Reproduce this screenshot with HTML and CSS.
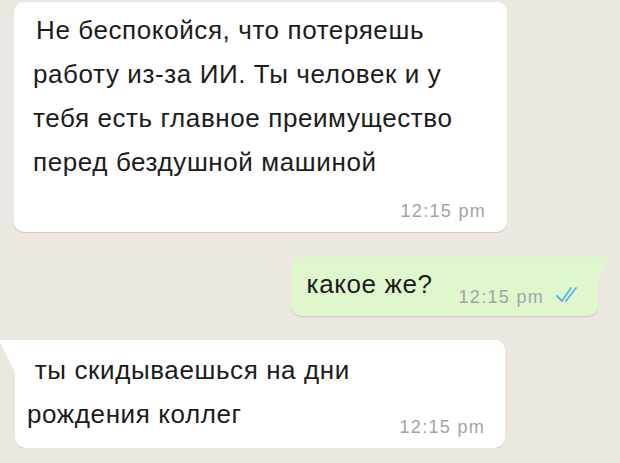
FILE: index.html
```html
<!DOCTYPE html>
<html lang="ru">
<head>
  <meta charset="UTF-8">
  <title>Чат</title>
  <link rel="stylesheet" href="styles.css">
</head>
<body>

  <div class="chat">

    <div class="msg in first">
      <div class="text">
        <span class="lead">Не беспокойся, что потеряешь</span><br>
        работу из-за ИИ. Ты человек и у<br>
        тебя есть главное преимущество<br>
        перед бездушной машиной
      </div>
      <div class="meta"><span class="time">12:15 pm</span></div>
    </div>

    <div class="msg out tail">
      <div class="text">какое же?</div>
      <span class="time">12:15 pm</span>
      <svg class="ticks" width="28" height="20" viewBox="0 0 28 20">
        <path d="M3 12 L8 17 L17 4" fill="none" stroke="#5ab3e6" stroke-width="1.8" stroke-linecap="round" stroke-linejoin="round"/>
        <path d="M12 17 L22 4" fill="none" stroke="#5ab3e6" stroke-width="1.8" stroke-linecap="round"/>
      </svg>
    </div>

    <div class="msg in last tail">
      <div class="text">
        &nbsp;ты скидываешься на дни<br>
        рождения коллег
      </div>
      <span class="time">12:15 pm</span>
    </div>

  </div>

</body>
</html>
```

FILE: styles.css
```css
body {
  margin: 0;
  background: #ece7e1;
  font-family: "Liberation Sans", Arial, sans-serif;
  color: #1c1c1c;
}
.chat {
  display: flex;
  flex-direction: column;
  padding-top: 2px;
}
.msg {
  position: relative;
  background: white;
  border-radius: 10px;
  box-shadow: 0 1px 1px rgba(0, 0, 0, 0.14);
}
.text {
  font-size: 26px;
  letter-spacing: 0.6px;
  line-height: 44px;
}
.lead { margin-left: 3px; }
.time {
  font-size: 18px;
  letter-spacing: 1.3px;
  line-height: 24px;
  color: #a3a3a3;
  white-space: nowrap;
}

/* first incoming */
.first {
  margin-left: 14px;
  width: 493px;
  box-sizing: border-box;
  padding: 6px 21px 9px 19px;
}
.first .meta {
  margin-top: 15px;
  text-align: right;
}

/* outgoing */
.out {
  align-self: flex-end;
  margin: 25px 22px 0 0;
  background: #e0f7cd;
  border-top-right-radius: 0;
  display: flex;
  align-items: flex-end;
  padding: 5px 16px 7px 16px;
}
.out .text { margin-bottom: 3px; }
.out .time { margin-left: 26px; }
.out .ticks { margin: 0 0 5px 10px; }
.out.tail::before {
  content: "";
  position: absolute;
  top: 0;
  right: -13px;
  width: 13px;
  height: 23px;
  background: #e0f7cd;
  clip-path: polygon(0 0, 100% 0, 0 100%);
}

/* last incoming */
.last {
  margin: 24px 0 0 15px;
  width: 490px;
  box-sizing: border-box;
  border-top-left-radius: 0;
  display: flex;
  align-items: flex-end;
  justify-content: space-between;
  padding: 8px 20px 9px 12px;
}
.last .text { margin-bottom: 3px; }
.last.tail::before {
  content: "";
  position: absolute;
  top: 0;
  left: -16px;
  width: 16px;
  height: 32px;
  background: white;
  clip-path: polygon(0 0, 100% 0, 100% 100%);
}
```
